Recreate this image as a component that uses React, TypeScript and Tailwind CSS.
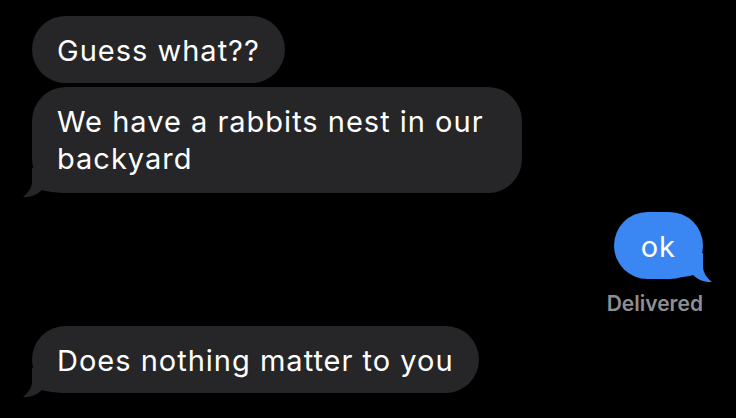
import React from 'react';

const font = { fontFamily: 'Inter, "Noto Sans", sans-serif' };

function TailLeft() {
  return (
    <svg className="absolute left-[-10px] bottom-[-5px]" width="50" height="30" viewBox="0 0 50 30">
      <path d="M10 0 L10 13 C10 20 6 25 1 29 C8 29.5 15 27 20 22 C26 24 36 25 50 25 L50 0 Z" fill="#262628" />
    </svg>
  );
}

function TailRight() {
  return (
    <svg className="absolute right-[-10px] bottom-[-4px]" width="50" height="30" viewBox="0 0 50 30">
      <path d="M40 0 L40 13 C40 20 44 25 49 29 C42 29.5 35 27 30 22 C24 24 14 25 0 25 L0 0 Z" fill="#3a86f2" />
    </svg>
  );
}

function Bubble({ children, tail, className }: { children: React.ReactNode; tail?: boolean; className?: string }) {
  return (
    <div className={`relative self-start bg-[#262628] text-white rounded-[34px] px-[25px] text-[29px] leading-[37px] tracking-[1px] ${className ?? ''}`}>
      {tail && <TailLeft />}
      <span className="relative">{children}</span>
    </div>
  );
}

export default function App() {
  return (
    <div className="w-[736px] h-[418px] bg-black overflow-hidden flex flex-col pt-[16px] pl-[32px] pr-[33px]" style={font}>
      <Bubble className="pt-[16px] pb-[14px]">Guess what??</Bubble>
      <Bubble tail className="mt-[4px] pt-[16px] pb-[16px] max-w-[490px]">
        We have a rabbits nest in our backyard
      </Bubble>
      <div className="relative self-end mt-[19px] bg-[#3a86f2] text-white rounded-[34px] px-[27px] pt-[16px] pb-[14px] text-[29px] leading-[37px] tracking-[1px]">
        <TailRight />
        <span className="relative">ok</span>
      </div>
      <div className="self-end mt-[12px] text-[21px] leading-[25px] font-semibold text-[#8e8e93]">Delivered</div>
      <Bubble tail className="mt-[10px] pt-[16px] pb-[14px]">Does nothing matter to you</Bubble>
    </div>
  );
}
